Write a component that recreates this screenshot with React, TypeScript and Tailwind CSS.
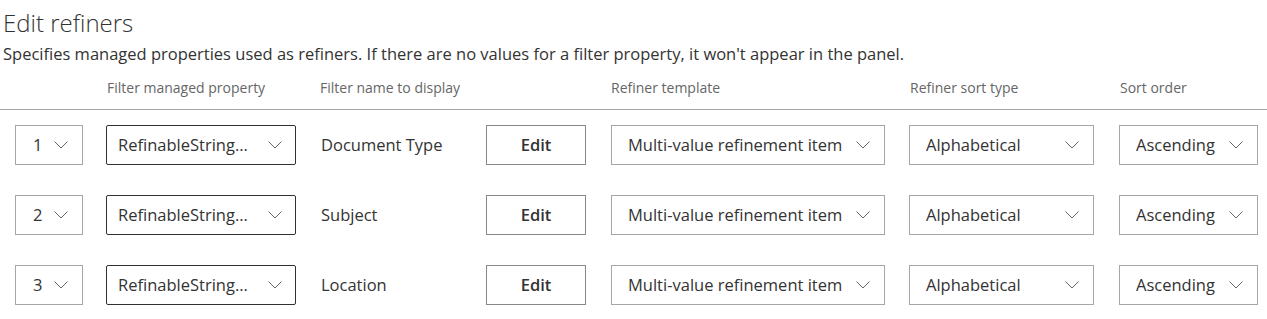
import React from 'react';

type Row = { order: number; property: string; name: string; template: string; sortType: string; sortOrder: string };

const ROWS: Row[] = [
  { order: 1, property: 'RefinableString...', name: 'Document Type', template: 'Multi-value refinement item', sortType: 'Alphabetical', sortOrder: 'Ascending' },
  { order: 2, property: 'RefinableString...', name: 'Subject', template: 'Multi-value refinement item', sortType: 'Alphabetical', sortOrder: 'Ascending' },
  { order: 3, property: 'RefinableString...', name: 'Location', template: 'Multi-value refinement item', sortType: 'Alphabetical', sortOrder: 'Ascending' },
];

function Chevron() {
  return (
    <svg width="14" height="8" viewBox="0 0 14 8" className="shrink-0" aria-hidden>
      <polyline points="0.5,0.5 7,7 13.5,0.5" fill="none" stroke="#666666" strokeWidth="1" />
    </svg>
  );
}

// Fake dropdown - border + value + chevron
function Dropdown({ value, className, pad = 'pl-4 pr-[14px]' }: { value: string; className: string; pad?: string }) {
  return (
    <div className={`flex h-10 shrink-0 items-center justify-between border bg-white ${pad} ${className}`}>
      <span className="truncate text-[16.5px] text-[#333333]">{value}</span>
      <Chevron />
    </div>
  );
}

export default function App() {
  return (
    <div className="w-[1267px] bg-white text-[#333333]" style={{ fontFamily: '"Open Sans", "Noto Sans", sans-serif' }}>
      <h1 className="pl-[3px] pt-[7px] text-[24px] font-light leading-[32px] text-[#333333]">Edit refiners</h1>
      <p className="mt-[4px] pl-[3px] text-[16.5px] leading-[22px] text-[#333333]">
        Specifies managed properties used as refiners. If there are no values for a filter property, it won't appear in the panel.
      </p>

      {/* Header */}
      <div className="mt-[13px] flex h-[32px] items-start border-b border-[#a6a6a6] text-[14px] leading-[20px] text-[#666666]">
        <div className="w-[107px] shrink-0" />
        <div className="w-[213px] shrink-0">Filter managed property</div>
        <div className="w-[291px] shrink-0">Filter name to display</div>
        <div className="w-[299px] shrink-0">Refiner template</div>
        <div className="w-[210px] shrink-0">Refiner sort type</div>
        <div>Sort order</div>
      </div>

      {/* Rows */}
      <div className="flex flex-col gap-[30px] pt-[15px]">
        {ROWS.map((r) => (
          <div key={r.order} className="flex items-center">
            <div className="w-[15px] shrink-0" />
            <div className="flex h-10 w-[68px] shrink-0 items-center justify-between border border-[#a6a6a6] pl-[17px] pr-[14px]">
              <span className="text-[16.5px]">{r.order}</span>
              <Chevron />
            </div>
            <div className="w-[23px] shrink-0" />
            <Dropdown value={r.property} className="w-[190px] rounded-[2px] border-[#323130]" pad="pl-[11px] pr-[13px]" />
            <div className="w-[190px] shrink-0 pl-[25px] text-[16.5px]">{r.name}</div>
            <button className="h-10 w-[100px] shrink-0 border border-[#8a8886] bg-white text-[16.5px] font-semibold text-[#333333]">
              Edit
            </button>
            <div className="w-[25px] shrink-0" />
            <Dropdown value={r.template} className="w-[274px] border-[#a6a6a6]" />
            <div className="w-[24px] shrink-0" />
            <Dropdown value={r.sortType} className="w-[185px] border-[#a6a6a6]" />
            <div className="w-[25px] shrink-0" />
            <Dropdown value={r.sortOrder} className="w-[139px] border-[#a6a6a6]" />
          </div>
        ))}
      </div>
    </div>
  );
}
